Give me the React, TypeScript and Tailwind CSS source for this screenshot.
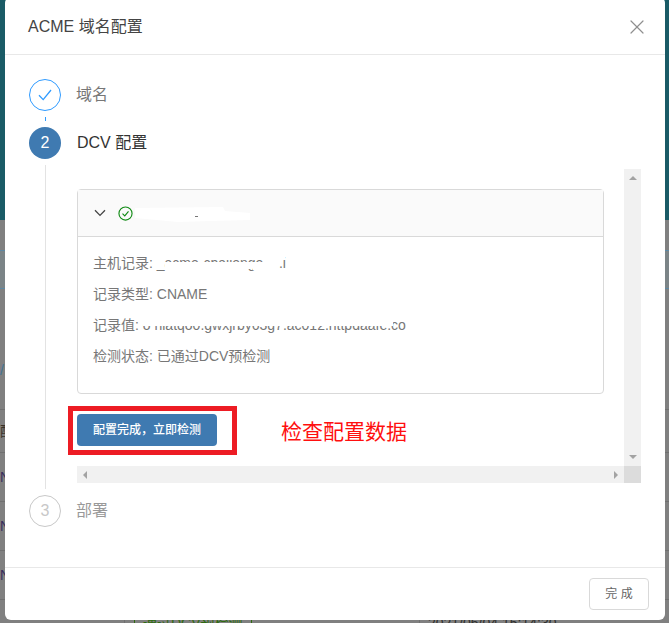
import { X } from "lucide-react";

function PageBehind() {
  const rows = [
    { text: "配置", cls: "h-[43px] pt-[11px] text-[#3a3228]" },
    { text: "NAME", cls: "h-[49px] pt-[14px] text-[#3a2f5e]" },
    { text: "NAME", cls: "h-[49px] pt-[14px] text-[#3a2f5e]" },
    { text: "NAME", cls: "h-[49px] pt-[14px] text-[#3a2f5e]" },
  ];
  return (
    <div className="flex h-[623px] flex-col overflow-hidden bg-[#808080]">
      <div className="h-[220px] shrink-0 bg-[#1a5b66]" />
      <div className="mt-[30px] h-[39px] shrink-0 border-y border-[#5d88a3] bg-[#7b8487]" />
      <div className="h-[121px] shrink-0 border-b border-[#707070] pt-[71px] text-sm text-[#3f7396]">/</div>
      {rows.map((row, i) => (
        <div key={i} className={`shrink-0 border-b border-[#707070] text-sm ${row.cls}`}>
          {row.text}
        </div>
      ))}
      <div className="flex h-[24px] shrink-0 pl-[124px] text-sm leading-[46px]">
        <div className="w-[296px] border-x border-[#707070] pl-[9px]">
          <span className="border border-[#2f6a10] px-2 text-[#2f6a10]">通过DCV预检测</span>
        </div>
        <span className="pl-2 text-[#30302e]">2021/06/04 15:14:30</span>
      </div>
    </div>
  );
}

function SmudgedValue({ children, covers }: { children: string; covers: string[] }) {
  return (
    <span className="relative inline-block">
      {children}
      {covers.map((cover) => (
        <span key={cover} className={`absolute bg-white ${cover}`} />
      ))}
    </span>
  );
}

function Arrow({ dir }: { dir: "up" | "down" | "left" | "right" }) {
  const points = {
    up: "4,0 8,4 0,4",
    down: "0,0 8,0 4,4",
    left: "4,0 4,8 0,4",
    right: "0,0 4,4 0,8",
  }[dir];
  const box = dir === "up" || dir === "down" ? "0 0 8 4" : "0 0 4 8";
  const size = dir === "up" || dir === "down" ? "h-1 w-2" : "h-2 w-1";
  return (
    <svg viewBox={box} className={size}>
      <polygon points={points} fill="#a3a3a3" />
    </svg>
  );
}

function RecordCard() {
  return (
    <div className="w-[527px] rounded border border-[#d9d9d9]">
      <div className="relative flex h-[47px] items-center gap-3 border-b border-[#d9d9d9] bg-[#fafafa] pl-4">
        <svg viewBox="0 0 12 8" className="h-2 w-3 fill-none stroke-[#444] stroke-[1.3]">
          <path d="M1 1.2 L6 6.4 L11 1.2" />
        </svg>
        <svg viewBox="0 0 16 16" className="h-[15px] w-[15px] fill-none stroke-[#0f8a13] stroke-[1.2]">
          <circle cx="8" cy="8" r="7" />
          <path d="M4.8 8.2 L7.2 10.5 L11.2 5.8" />
        </svg>
        {/* redaction smear over the domain name */}
        <svg viewBox="0 0 118 18" className="absolute left-[55px] top-[15px] h-[18px] w-[118px]">
          <path d="M2 3 L90 2 L92 6 L117 8 L117 15 L78 16 L45 17 L2 13 Z" fill="#ffffff" />
        </svg>
        <span className="absolute left-[117px] top-[26px] h-px w-[3px] bg-[#777]" />
      </div>
      <div className="h-[156px] pl-[15px] pt-[18px] text-sm leading-[17px] text-[#777]">
        <p className="mb-[14px]">
          主机记录:{" "}
          <SmudgedValue
            covers={[
              "left-[8px] top-0 h-[5px] w-[120px]",
              "left-[8px] top-[7px] h-[6px] w-[88px]",
              "left-[96px] top-[7px] h-[8px] w-[20px]",
            ]}
          >
            _acme-challenge&nbsp;&nbsp;&nbsp;&nbsp;.i
          </SmudgedValue>
        </p>
        <p className="mb-[14px]">记录类型: CNAME</p>
        <p className="mb-[14px]">
          记录值:{" "}
          <SmudgedValue covers={["left-0 top-0 h-[9px] w-[250px]"]}>
            o hlatqo0.gwxjrby63g7.ac012.httpdaafe.co
          </SmudgedValue>
        </p>
        <p>检测状态: 已通过DCV预检测</p>
      </div>
    </div>
  );
}

function ScrollPanel() {
  return (
    <div className="mt-[10px] grid w-[564px] grid-cols-[547px_17px] grid-rows-[297px_17px]">
      <div className="relative pt-5">
        <RecordCard />
        <button className="mt-5 block h-8 w-[140px] rounded bg-[#3f7ab1] text-xs font-medium text-white">
          配置完成，立即检测
        </button>
        <div className="absolute left-[-9px] top-[237px] h-[49px] w-[169px] border-[5px] border-[#ed1c24]" />
        <span className="absolute left-[204px] top-[249px] text-[21px] leading-[28px] text-[#ff0f0f]">
          检查配置数据
        </span>
      </div>
      <div className="flex flex-col items-center justify-between bg-[#f1f1f1] py-[7px]">
        <Arrow dir="up" />
        <Arrow dir="down" />
      </div>
      <div className="flex items-center justify-between bg-[#f1f1f1] px-[6px]">
        <Arrow dir="left" />
        <Arrow dir="right" />
      </div>
      <div className="bg-[#dcdcdc]" />
    </div>
  );
}

function Steps() {
  return (
    <div className="h-[512px] pl-6 pt-6">
      <div className="flex h-12">
        <div className="flex w-8 flex-col items-center">
          <span className="flex h-8 w-8 items-center justify-center rounded-full border border-[#2f9bff]">
            <svg viewBox="0 0 14 12" className="h-3 w-[14px] fill-none stroke-[#2f9bff] stroke-[1.3]">
              <path d="M1 6.2 L5.2 10.6 L13 1" />
            </svg>
          </span>
          <span className="mt-[6px] h-1 w-px bg-[#2f9bff]" />
        </div>
        <span className="ml-[15px] text-base leading-8 text-[#777]">域名</span>
      </div>
      <div className="flex h-[368px]">
        <div className="flex w-8 flex-col items-center">
          <span className="flex h-8 w-8 shrink-0 items-center justify-center rounded-full bg-[#3f7ab1] text-base text-white">
            2
          </span>
          <span className="my-[6px] h-[324px] w-px bg-[#e3e3e3]" />
        </div>
        <div className="ml-4">
          <div className="text-base leading-8 text-[#333]">DCV 配置</div>
          <ScrollPanel />
        </div>
      </div>
      <div className="flex">
        <span className="flex h-8 w-8 items-center justify-center rounded-full border border-[#c8c8c8] text-base text-[#c8c8c8]">
          3
        </span>
        <span className="ml-[15px] text-base leading-8 text-[#999]">部署</span>
      </div>
    </div>
  );
}

export default function App() {
  return (
    <div className="relative h-[623px] w-[669px] overflow-hidden font-['Liberation_Sans','Noto_Sans_CJK_SC',sans-serif]">
      <PageBehind />
      <div className="absolute left-[5px] top-[-3px] flex h-[623px] w-[660px] flex-col rounded-md bg-white">
        <div className="flex h-[58px] shrink-0 items-center justify-between border-b border-[#e8e8e8] pl-[23px] pr-4 pt-[3px]">
          <span className="text-base text-[#444]">ACME 域名配置</span>
          <X className="h-6 w-6 text-[#8f8f8f]" strokeWidth={1.2} />
        </div>
        <Steps />
        <div className="flex flex-1 items-center justify-end border-t border-[#e8e8e8] pr-4">
          <button className="h-8 w-[60px] rounded border border-[#d9d9d9] bg-white text-xs text-[#666]">
            完 成
          </button>
        </div>
      </div>
    </div>
  );
}
